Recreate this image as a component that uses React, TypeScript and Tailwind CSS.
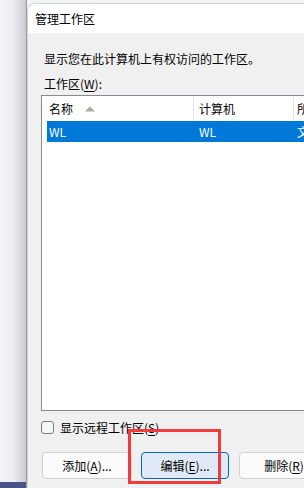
import React from "react";

const font = { fontFamily: "'Noto Sans CJK SC', 'Noto Sans', sans-serif" };

function U({ c }: { c: string }) {
  return <span className="underline underline-offset-2 decoration-1">{c}</span>;
}

export default function App() {
  return (
    <div
      className="relative w-[304px] h-[488px] overflow-hidden flex bg-[#f3f4f8] text-[12px] text-black"
      style={font}
    >
      {/* left background window */}
      <div className="w-[26px] shrink-0 flex flex-col">
        <div className="flex-1 bg-gradient-to-r from-[#f4f5f9] via-[#eceef3] to-[#c9cacf]" />
        <div className="h-[6px] bg-[#49538a]" />
      </div>
      <div className="w-px shrink-0 bg-[#9c9ca2]" />
      {/* dialog */}
      <div className="flex-1 min-w-0 mt-[3px] rounded-tl-[8px] border-l border-t border-[#d6d6d8] bg-[#f0f0f0] flex flex-col overflow-hidden">
        <div className="h-[29px] shrink-0 bg-white flex items-center pl-[7px] leading-none">管理工作区</div>
        <div className="flex-1 flex flex-col pl-[13px]">
          <div className="mt-[17px] ml-[3px] h-[17px] leading-[17px] whitespace-nowrap">
            显示您在此计算机上有权访问的工作区。
          </div>
          <div className="mt-[8px] ml-[3px] h-[17px] leading-[17px] whitespace-nowrap">
            工作区(<U c="W" />):
          </div>
          {/* list box */}
          <div className="mt-[3px] h-[316px] w-[300px] shrink-0 border border-[#868a91] bg-white pl-[5px] flex flex-col">
            <div className="h-[25px] flex items-stretch whitespace-nowrap">
              <div className="w-[146px] shrink-0 flex items-center pl-[2px]">
                <span>名称</span>
                <svg width="10" height="6" viewBox="0 0 10 6" className="ml-[12px]">
                  <path d="M0 5.5 L5 0.5 L10 5.5 Z" fill="#aaa99b" />
                </svg>
              </div>
              <div className="w-px shrink-0 bg-[#e6e6e6]" />
              <div className="w-[99px] shrink-0 flex items-center pl-[5px]">计算机</div>
              <div className="w-px shrink-0 bg-[#e6e6e6]" />
              <div className="flex-1 flex items-center pl-[3px]">所有者</div>
            </div>
            <div className="h-[21px] bg-[#0078d7] text-white flex items-center whitespace-nowrap">
              <div className="w-[147px] shrink-0 pl-[2px]">WL</div>
              <div className="w-[100px] shrink-0 pl-[5px]">WL</div>
              <div className="flex-1 pl-[3px]">文件系统</div>
            </div>
          </div>
          {/* checkbox */}
          <div className="mt-[10px] flex items-center h-[13px]">
            <div className="w-[13px] h-[13px] shrink-0 rounded-[3px] border border-[#7d7d7d] bg-[#f7f7f7]" />
            <span className="ml-[6px] whitespace-nowrap leading-none">
              显示远程工作区(<U c="S" />)
            </span>
          </div>
          {/* buttons */}
          <div className="mt-[18px] ml-px flex items-center whitespace-nowrap">
            <div className="w-[90px] shrink-0 h-[27px] rounded-[4px] border border-[#d1d1d1] bg-[#fbfbfb] flex items-center justify-center">
              添加(<U c="A" />)...
            </div>
            <div className="ml-[9px] w-[88px] shrink-0 h-[27px] rounded-[4px] border border-[#0067c0] bg-[#e0eaf6] flex items-center justify-center">
              编辑(<U c="E" />)...
            </div>
            <div className="ml-[10px] w-[90px] shrink-0 h-[27px] rounded-[4px] border border-[#d1d1d1] bg-[#fbfbfb] flex items-center justify-center">
              删除(<U c="R" />)
            </div>
          </div>
        </div>
      </div>
      {/* red annotation */}
      <div className="absolute left-[128px] top-[429px] w-[93px] h-[55px] border-[3px] border-[#ee3b3b]" />
    </div>
  );
}
